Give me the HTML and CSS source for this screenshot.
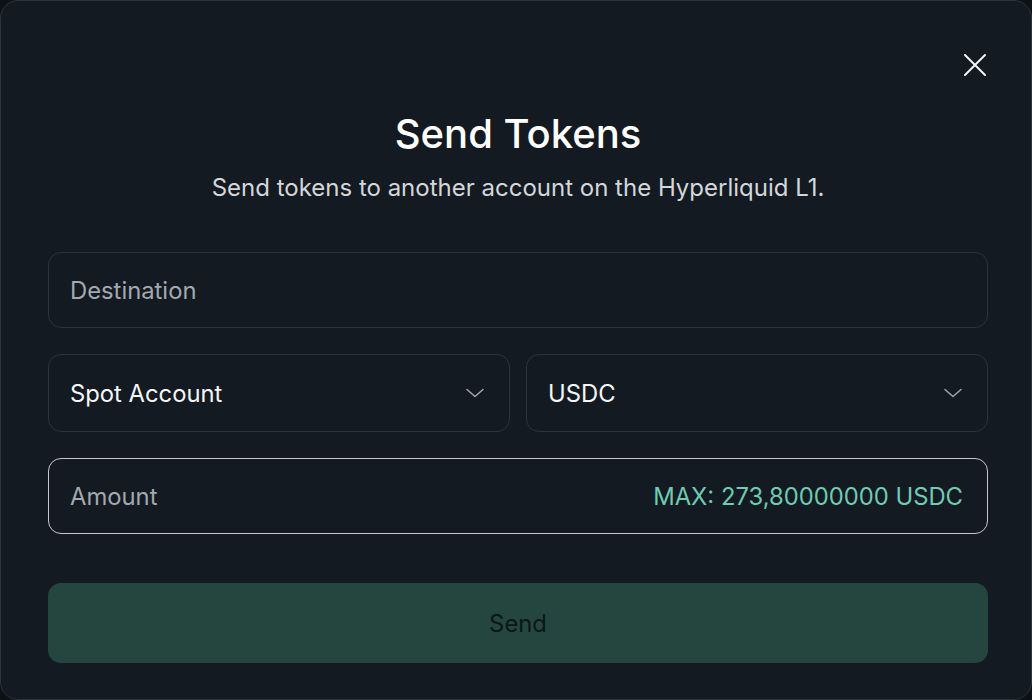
FILE: index.html
```html
<!DOCTYPE html>
<html lang="en">
<head>
<meta charset="utf-8">
<title>Send Tokens</title>
<link rel="stylesheet" href="styles.css">
</head>
<body>
<div class="modal">
  <button class="close" aria-label="Close">
    <svg width="22" height="22" viewBox="0 0 22 22" fill="none" stroke="currentColor" stroke-width="2" stroke-linecap="round"><path d="M1 1L21 21M21 1L1 21"/></svg>
  </button>
  <div class="header">
    <h1 class="title">Send Tokens</h1>
    <p class="subtitle">Send tokens to another account on the Hyperliquid L1.</p>
  </div>
  <div class="form">
    <div class="field">
      <span class="placeholder">Destination</span>
    </div>
    <div class="row">
      <div class="field select">
        <span class="value">Spot Account</span>
        <svg class="chevron" width="18" height="10" viewBox="0 0 18 10" fill="none" stroke="currentColor" stroke-width="1.5" stroke-linecap="round" stroke-linejoin="round"><path d="M1 1.5L9 8.5L17 1.5"/></svg>
      </div>
      <div class="field select">
        <span class="value">USDC</span>
        <svg class="chevron" width="18" height="10" viewBox="0 0 18 10" fill="none" stroke="currentColor" stroke-width="1.5" stroke-linecap="round" stroke-linejoin="round"><path d="M1 1.5L9 8.5L17 1.5"/></svg>
      </div>
    </div>
    <div class="field focused">
      <span class="placeholder">Amount</span>
      <span class="max">MAX: 273,80000000 USDC</span>
    </div>
    <button class="send">Send</button>
  </div>
</div>
</body>
</html>
```
FILE: styles.css
```css
* { box-sizing: border-box; }
html, body { margin: 0; padding: 0; }
body {
  background: #0c1115;
  font-family: Inter, "Noto Sans", sans-serif;
  width: 1032px;
  height: 700px;
  overflow: hidden;
}
.modal {
  position: relative;
  width: 1032px;
  height: 700px;
  background: #131a21;
  border: 1px solid #2c343c;
  border-radius: 18px;
  padding: 109px 43px 0 47px;
}
.close {
  position: absolute;
  top: 53px;
  right: 45px;
  width: 22px;
  height: 22px;
  padding: 0;
  border: 0;
  background: none;
  color: #f2f4f6;
  cursor: pointer;
  display: flex;
}
.header {
  display: flex;
  flex-direction: column;
  align-items: center;
}
.title {
  margin: 0;
  font-size: 40px;
  line-height: 48px;
  font-weight: 500;
  color: #ffffff;
}
.subtitle {
  margin: 15px 0 0;
  font-size: 24px;
  line-height: 30px;
  color: #d3d7db;
}
.form {
  margin-top: 49px;
  display: flex;
  flex-direction: column;
  gap: 26px;
}
.field {
  height: 76px;
  border: 1.5px solid #2c343b;
  border-radius: 13px;
  display: flex;
  align-items: center;
  justify-content: space-between;
  padding: 0 24px 0 21px;
  font-size: 23.8px;
}
.row {
  display: flex;
  gap: 16px;
}
.row .field { flex: 1; height: 78px; }
.placeholder { color: #a3a9ae; }
.value { color: #f4f6f8; }
.chevron { color: #a0a6ac; margin-right: 1px; }
.focused { border-color: #c5c9cd; }
.max { color: #6fcbb2; }
.send {
  margin-top: 23px;
  height: 80px;
  border: 0;
  border-radius: 13px;
  background: #24463f;
  color: #0c1715;
  font-family: inherit;
  font-size: 23.8px;
  cursor: pointer;
}
```
